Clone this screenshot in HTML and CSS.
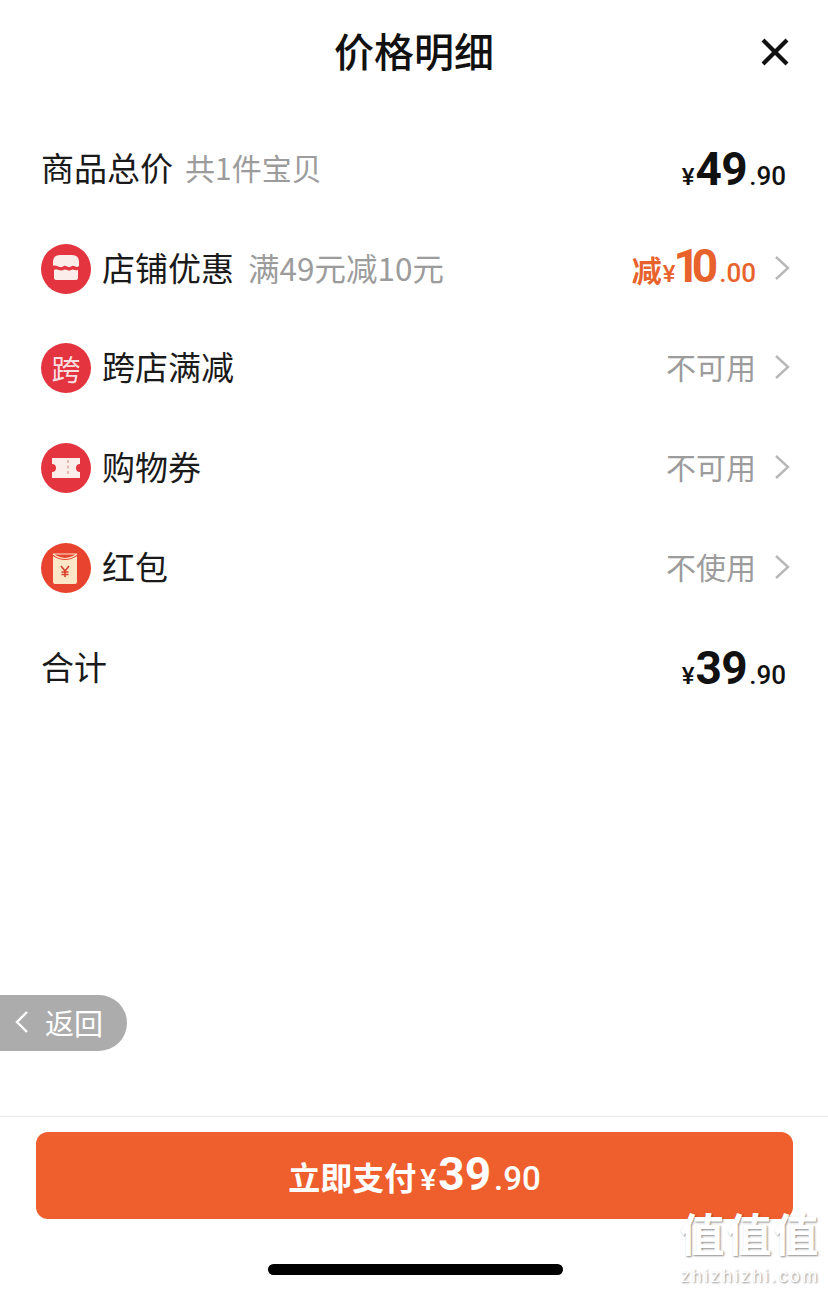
FILE: index.html
```html
<!DOCTYPE html>
<html lang="zh-CN">
<head>
    <meta charset="UTF-8">
    <meta name="viewport" content="width=device-width, initial-scale=1.0">
    <title>价格明细</title>
    <link rel="stylesheet" href="styles.css">
</head>
<body>
    <div class="page">
        <header class="header">
            <h1 class="title">价格明细</h1>
            <svg class="close" viewBox="0 0 30 30" width="30" height="30"><path d="M3 3 L27 27 M27 3 L3 27" stroke="#111" stroke-width="4.200" fill="none"/></svg>
        </header>

        <div class="list">
            <div class="row">
                <span class="label">商品总价</span>
                <span class="note note-first">共1件宝贝</span>
                <span class="price"><i>¥</i><b>49</b><em>.90</em></span>
            </div>
            <div class="row">
                <span class="badge">
                    <svg viewBox="0 0 50 50" width="50" height="50"><path d="M12 22 V18 Q12 11 19 11 H31 Q38 11 38 18 V22 C35 25 33 20 30 22.500 C27.500 25 25 20 22 22.500 C19 25 15 20 12 22 Z" fill="#fbeeea"/><path d="M13 26 C16 23.500 19 28 22 26 C25 24 27.500 28 30 26 C33 24 35 28 37 25.500 L37 34 Q37 36 35 36 L15 36 Q13 36 13 34 Z" fill="#fbeeea"/></svg>
                </span>
                <span class="label">店铺优惠</span>
                <span class="note">满49元减10元</span>
                <span class="price price-off"><span class="off">减</span><i>¥</i><b>10</b><em>.00</em></span>
                <svg class="arrow" viewBox="0 0 16 26" width="16" height="26"><path d="M2 2 L14 13 L2 24" stroke="#b8b8b8" stroke-width="2.400" fill="none"/></svg>
            </div>
            <div class="row">
                <span class="badge badge-text">跨</span>
                <span class="label">跨店满减</span>
                <span class="state">不可用</span>
                <svg class="arrow" viewBox="0 0 16 26" width="16" height="26"><path d="M2 2 L14 13 L2 24" stroke="#b8b8b8" stroke-width="2.400" fill="none"/></svg>
            </div>
            <div class="row">
                <span class="badge">
                    <svg viewBox="0 0 50 50" width="50" height="50"><path d="M11 15 L39 15 L39 21 A4 4 0 0 0 39 29 L39 35 L11 35 L11 29 A4 4 0 0 0 11 21 Z" fill="#fbeeea"/><path d="M27 17 V33" stroke="#e9b9b4" stroke-width="2" stroke-dasharray="3 2.500"/></svg>
                </span>
                <span class="label">购物券</span>
                <span class="state">不可用</span>
                <svg class="arrow" viewBox="0 0 16 26" width="16" height="26"><path d="M2 2 L14 13 L2 24" stroke="#b8b8b8" stroke-width="2.400" fill="none"/></svg>
            </div>
            <div class="row">
                <span class="badge badge-packet">
                    <svg viewBox="0 0 50 50" width="50" height="50"><path d="M12 13 Q24 21 36 13 V39 Q36 41 34 41 H14 Q12 41 12 39 Z" fill="#fbe6c8"/><path d="M12 11 H36 M12 11 Q24 20 36 11" stroke="#fbe6c8" stroke-width="1.200" fill="none"/><path d="M20 23 L24 28 L28 23 M24 28 V34 M20.500 29 H27.500 M20.500 31.500 H27.500" stroke="#d8412c" stroke-width="1.600" fill="none"/></svg>
                </span>
                <span class="label">红包</span>
                <span class="state">不使用</span>
                <svg class="arrow" viewBox="0 0 16 26" width="16" height="26"><path d="M2 2 L14 13 L2 24" stroke="#b8b8b8" stroke-width="2.400" fill="none"/></svg>
            </div>
            <div class="row">
                <span class="label">合计</span>
                <span class="price"><i>¥</i><b>39</b><em>.90</em></span>
            </div>
        </div>

        <div class="footer">
            <button class="pay"><span class="pay-text">立即支付</span><i>¥</i><b>39</b><em>.90</em></button>
            <div class="home-bar"></div>
        </div>

        <div class="back">
            <svg viewBox="0 0 14 24" width="14" height="24"><path d="M12 2 L2 12 L12 22" stroke="#fff" stroke-width="2.400" fill="none"/></svg>
            <span>返回</span>
        </div>

        <div class="mark">
            <div class="mark-cn">值值值</div>
            <div class="mark-en">zhizhizhi.com</div>
        </div>
    </div>
</body>
</html>
```

FILE: styles.css
```css
* {
    box-sizing: border-box;
}
html, body {
    margin: 0;
    padding: 0;
}
body {
    background: #fff;
    color: #1a1a1a;
    font-family: "Noto Sans CJK SC", "Noto Sans", sans-serif;
}
.page {
    position: relative;
    width: 828px;
    height: 1292px;
    overflow: hidden;
    display: flex;
    flex-direction: column;
}
.header {
    position: relative;
    height: 119px;
    flex: none;
    display: flex;
    justify-content: center;
    padding-top: 21px;
}
.title {
    margin: 0;
    font-size: 40px;
    line-height: 58px;
    font-weight: 500;
    color: #111;
}
.close {
    position: absolute;
    right: 38px;
    top: 37px;
}
.list {
    flex: 1;
    padding: 0 38px 0 41px;
}
.row {
    height: 99.8px;
    display: flex;
    align-items: center;
}
.label {
    margin-bottom: 4px;
    font-size: 33px;
    line-height: 48px;
    color: #1a1a1a;
}
.note {
    margin-left: 14px;
    margin-bottom: 4px;
    font-size: 31.500px;
    line-height: 48px;
    color: #9c9c9c;
}
.note-first {
    margin-left: 12px;
    font-size: 30px;
}
.badge {
    width: 50px;
    height: 50px;
    margin-right: 11px;
    flex: none;
    border-radius: 50%;
    background: #e3343f;
    display: flex;
    align-items: center;
    justify-content: center;
    overflow: hidden;
}
.badge-text {
    color: #fbdfe0;
    font-size: 29px;
    line-height: 50px;
}
.badge-packet {
    background: #e8432e;
}
.price {
    margin-left: auto;
    margin-right: 4px;
    margin-top: 8px;
    display: flex;
    align-items: baseline;
    font-family: Roboto, "Noto Sans", sans-serif;
    color: #111;
    line-height: 50px;
}
.price i {
    font-style: normal;
    font-weight: 500;
    font-size: 24px;
}
.price b {
    font-size: 46px;
    font-weight: 700;
    letter-spacing: -0.500px;
    margin-left: 1px;
}
.price em {
    font-style: normal;
    font-weight: 500;
    font-size: 26px;
    margin-left: 2px;
}
.price-off {
    color: #e8622c;
    margin-top: 2px;
    margin-right: 18px;
}
.price-off b {
    letter-spacing: -8px;
    margin-left: -2px;
}
.price-off em {
    margin-left: 9px;
}
.off {
    font-family: "Noto Sans CJK SC", sans-serif;
    font-size: 30px;
    font-weight: 700;
    margin-right: 1px;
}
.state {
    margin-left: auto;
    margin-right: 18px;
    margin-bottom: 4px;
    font-size: 30px;
    line-height: 48px;
    color: #9c9c9c;
}
.arrow {
    flex: none;
    margin-bottom: 2px;
}
.footer {
    flex: none;
    height: 176px;
    border-top: 1px solid #e9e9e9;
    padding: 15px 35px 0 36px;
    display: flex;
    flex-direction: column;
    align-items: center;
}
.pay {
    width: 100%;
    height: 87px;
    flex: none;
    display: flex;
    align-items: baseline;
    justify-content: center;
    border: none;
    border-radius: 12px;
    background: #ee5f2d;
    color: #fff;
    font-family: Roboto, sans-serif;
    line-height: 84px;
    padding: 0;
}
.pay-text {
    font-family: "Noto Sans CJK SC", sans-serif;
    font-size: 32px;
    font-weight: 700;
}
.pay i {
    font-style: normal;
    font-weight: 500;
    font-size: 30px;
    margin-left: 4px;
}
.pay b {
    font-size: 46px;
    font-weight: 700;
    margin-left: 2px;
}
.pay em {
    font-style: normal;
    font-weight: 500;
    font-size: 33px;
    margin-left: 3px;
}
.home-bar {
    width: 295px;
    height: 11px;
    margin-top: 45px;
    margin-right: -1px;
    flex: none;
    border-radius: 6px;
    background: #000;
}
.back {
    position: absolute;
    left: 0;
    top: 995px;
    width: 127px;
    height: 56px;
    padding-left: 15px;
    padding-bottom: 2px;
    border-radius: 0 28px 28px 0;
    background: #acacac;
    color: #fff;
    display: flex;
    align-items: center;
    gap: 16px;
    font-size: 29px;
}
.mark {
    position: absolute;
    left: 678px;
    top: 1205px;
    width: 144px;
    color: #fff;
    text-align: center;
    text-shadow: 1px 1px 2px rgba(0, 0, 0, 0.45);
}
.mark-cn {
    font-size: 45px;
    line-height: 56px;
    letter-spacing: 2px;
    font-weight: 700;
}
.mark-en {
    margin-top: 5px;
    font-family: "Liberation Sans", sans-serif;
    font-size: 18px;
    line-height: 20px;
    letter-spacing: 2.400px;
    white-space: nowrap;
}
```
